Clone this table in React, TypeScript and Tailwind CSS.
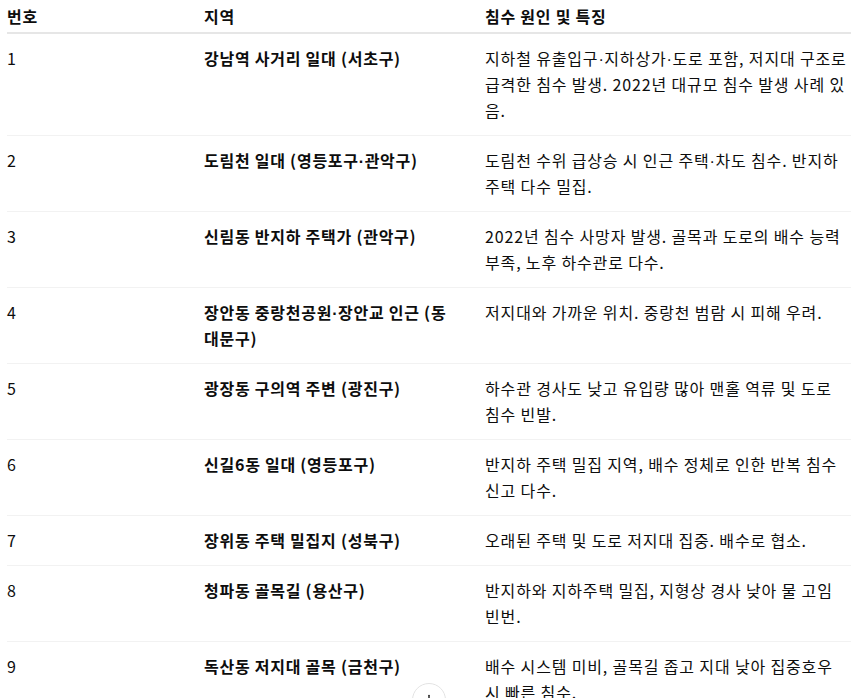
import { ArrowDown } from "lucide-react";
import { Fragment } from "react";

const rows = [
  {
    no: "1",
    area: "강남역 사거리 일대 (서초구)",
    desc: "지하철 유출입구·지하상가·도로 포함, 저지대 구조로 급격한 침수 발생. 2022년 대규모 침수 발생 사례 있음.",
  },
  {
    no: "2",
    area: "도림천 일대 (영등포구·관악구)",
    desc: "도림천 수위 급상승 시 인근 주택·차도 침수. 반지하 주택 다수 밀집.",
  },
  {
    no: "3",
    area: "신림동 반지하 주택가 (관악구)",
    desc: "2022년 침수 사망자 발생. 골목과 도로의 배수 능력 부족, 노후 하수관로 다수.",
  },
  {
    no: "4",
    area: "장안동 중랑천공원·장안교 인근 (동대문구)",
    desc: "저지대와 가까운 위치. 중랑천 범람 시 피해 우려.",
  },
  {
    no: "5",
    area: "광장동 구의역 주변 (광진구)",
    desc: "하수관 경사도 낮고 유입량 많아 맨홀 역류 및 도로 침수 빈발.",
  },
  {
    no: "6",
    area: "신길6동 일대 (영등포구)",
    desc: "반지하 주택 밀집 지역, 배수 정체로 인한 반복 침수 신고 다수.",
  },
  {
    no: "7",
    area: "장위동 주택 밀집지 (성북구)",
    desc: "오래된 주택 및 도로 저지대 집중. 배수로 협소.",
  },
  {
    no: "8",
    area: "청파동 골목길 (용산구)",
    desc: "반지하와 지하주택 밀집, 지형상 경사 낮아 물 고임 빈번.",
  },
  {
    no: "9",
    area: "독산동 저지대 골목 (금천구)",
    desc: "배수 시스템 미비, 골목길 좁고 지대 낮아 집중호우 시 빠른 침수.",
  },
];

// the CJK font draws "·" full width; the screenshot's dot is narrow
function Dots({ text }: { text: string }) {
  const parts = text.split("·");
  return (
    <>
      {parts.map((p, i) => (
        <Fragment key={i}>
          {i > 0 && (
            <span
              className="leading-none tracking-[0.5px]"
              style={{ fontFamily: '"Liberation Sans", sans-serif' }}
            >
              ·
            </span>
          )}
          {p}
        </Fragment>
      ))}
    </>
  );
}

export default function App() {
  return (
    <div
      className="min-h-screen bg-white text-[#0d0d0d] text-[16px] leading-[26px] tracking-[0.85px]"
      style={{ fontFamily: '"Noto Sans CJK KR", "Noto Sans", sans-serif' }}
    >
      <div className="pl-[7px] w-[851px]">
        <table className="w-full table-fixed border-collapse">
          <colgroup>
            <col className="w-[181px]" />
            <col className="w-[281px]" />
            <col />
          </colgroup>
          <thead>
            <tr className="border-b-2 border-[#e6e6e6]">
              <th className="pl-0 pr-4 pt-[3px] pb-[3px] text-left font-bold tracking-[0.75px]">번호</th>
              <th className="px-4 pt-[3px] pb-[3px] text-left font-bold tracking-[0.75px]">지역</th>
              <th className="pl-4 pr-0 pt-[3px] pb-[3px] text-left font-bold tracking-[0.75px]">
                침수 원인 및 특징
              </th>
            </tr>
          </thead>
          <tbody>
            {rows.map((r) => (
              <tr key={r.no} className="border-b border-[#f2f2f2]">
                <td className="pl-0 pr-4 pt-[11px] pb-[12px] align-top">{r.no}</td>
                <td className="px-4 pt-[11px] pb-[12px] align-top font-bold tracking-[0.75px]">
                  <Dots text={r.area} />
                </td>
                <td className="pl-4 pr-0 pt-[11px] pb-[12px] align-top">
                  <Dots text={r.desc} />
                </td>
              </tr>
            ))}
          </tbody>
        </table>
      </div>

      {/* scroll to bottom */}
      <button className="fixed left-1/2 -translate-x-1/2 top-[683px] w-[34px] h-[34px] rounded-full border border-[#e3e3e3] bg-white flex items-center justify-center">
        <ArrowDown className="w-4 h-4 text-[#0d0d0d]" strokeWidth={2} />
      </button>
    </div>
  );
}
